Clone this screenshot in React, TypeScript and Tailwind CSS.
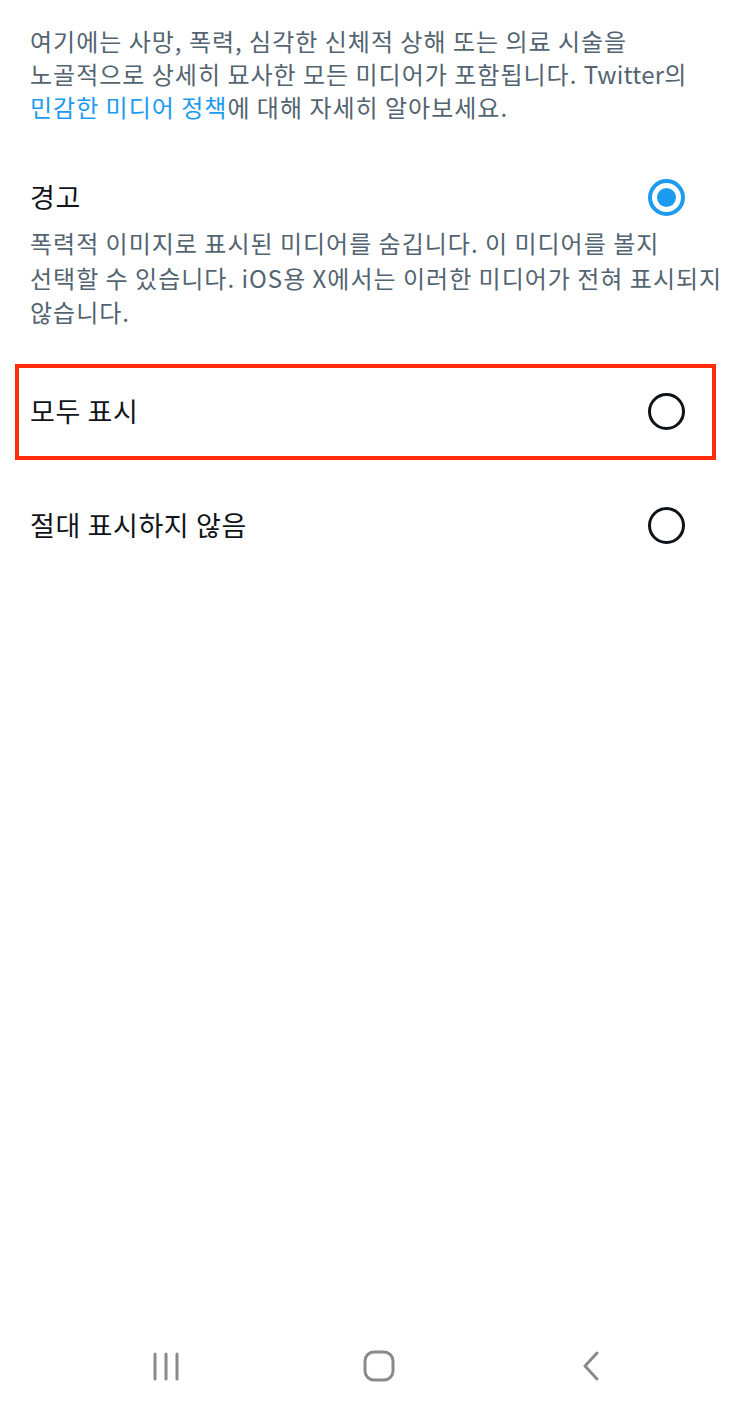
const FONT = { fontFamily: '"Noto Sans CJK KR", "Noto Sans", sans-serif' };

type RadioProps = { checked?: boolean };

const Radio = ({ checked }: RadioProps) =>
  checked ? (
    <span className="flex h-[37px] w-[37px] shrink-0 items-center justify-center rounded-full border-[4px] border-[#1d9bf0]">
      <span className="h-[19px] w-[19px] rounded-full bg-[#1d9bf0]" />
    </span>
  ) : (
    <span className="h-[37px] w-[37px] shrink-0 rounded-full border-[3px] border-[#0f1419]" />
  );

export default function App() {
  return (
    <div className="flex h-[1410px] w-[756px] flex-col bg-white" style={FONT}>
      <p className="whitespace-nowrap pl-[30px] pt-[24px] text-[24px] leading-[33px] tracking-[1px] text-[#536471]">
        여기에는 사망, 폭력, 심각한 신체적 상해 또는 의료 시술을
        <br />
        노골적으로 상세히 묘사한 모든 미디어가 포함됩니다. <span className="tracking-[0.2px]">Twitter</span>의
        <br />
        <span className="text-[#1d9bf0]">민감한 미디어 정책</span>에 대해 자세히 알아보세요.
      </p>

      <div className="mt-[50px] flex flex-col pl-[30px]">
        <div className="flex h-[48px] items-center justify-between pr-[71px]">
          <span className="text-[27px] tracking-[0.6px] text-[#0f1419]">경고</span>
          <Radio checked />
        </div>
        <p className="mt-[5px] whitespace-nowrap text-[24px] leading-[34.5px] tracking-[1px] text-[#536471]">
          폭력적 이미지로 표시된 미디어를 숨깁니다. 이 미디어를 볼지
          <br />
          선택할 수 있습니다. iOS용 X에서는 이러한 미디어가 전혀 표시되지
          <br />
          않습니다.
        </p>
      </div>

      <div className="ml-[15px] mt-[34px] flex h-[96px] w-[701px] items-center justify-between border-[4px] border-[#ff2d0a] pl-[11px] pr-[27px]">
        <span className="text-[27px] tracking-[0.6px] text-[#0f1419]">모두 표시</span>
        <Radio />
      </div>

      <div className="mt-[18px] flex h-[96px] items-center justify-between pl-[30px] pr-[71px]">
        <span className="text-[27px] tracking-[0.6px] text-[#0f1419]">절대 표시하지 않음</span>
        <Radio />
      </div>

      <div className="mt-auto flex h-[88px] items-center pl-[152px] text-[#8a8a8a]">
        <svg width="30" height="30" viewBox="0 0 30 30" fill="none" stroke="currentColor" strokeWidth="3" strokeLinecap="round">
          <path d="M3 3v25M14 3v25M25 3v25" />
        </svg>
        <svg className="ml-[181px]" width="32" height="32" viewBox="0 0 32 32" fill="none" stroke="currentColor" strokeWidth="3">
          <rect x="2" y="2" width="28" height="28" rx="9" />
        </svg>
        <svg className="ml-[187px]" width="18" height="30" viewBox="0 0 18 30" fill="none" stroke="currentColor" strokeWidth="3" strokeLinecap="round" strokeLinejoin="round">
          <path d="M15 2L3 15l12 13" />
        </svg>
      </div>
    </div>
  );
}
